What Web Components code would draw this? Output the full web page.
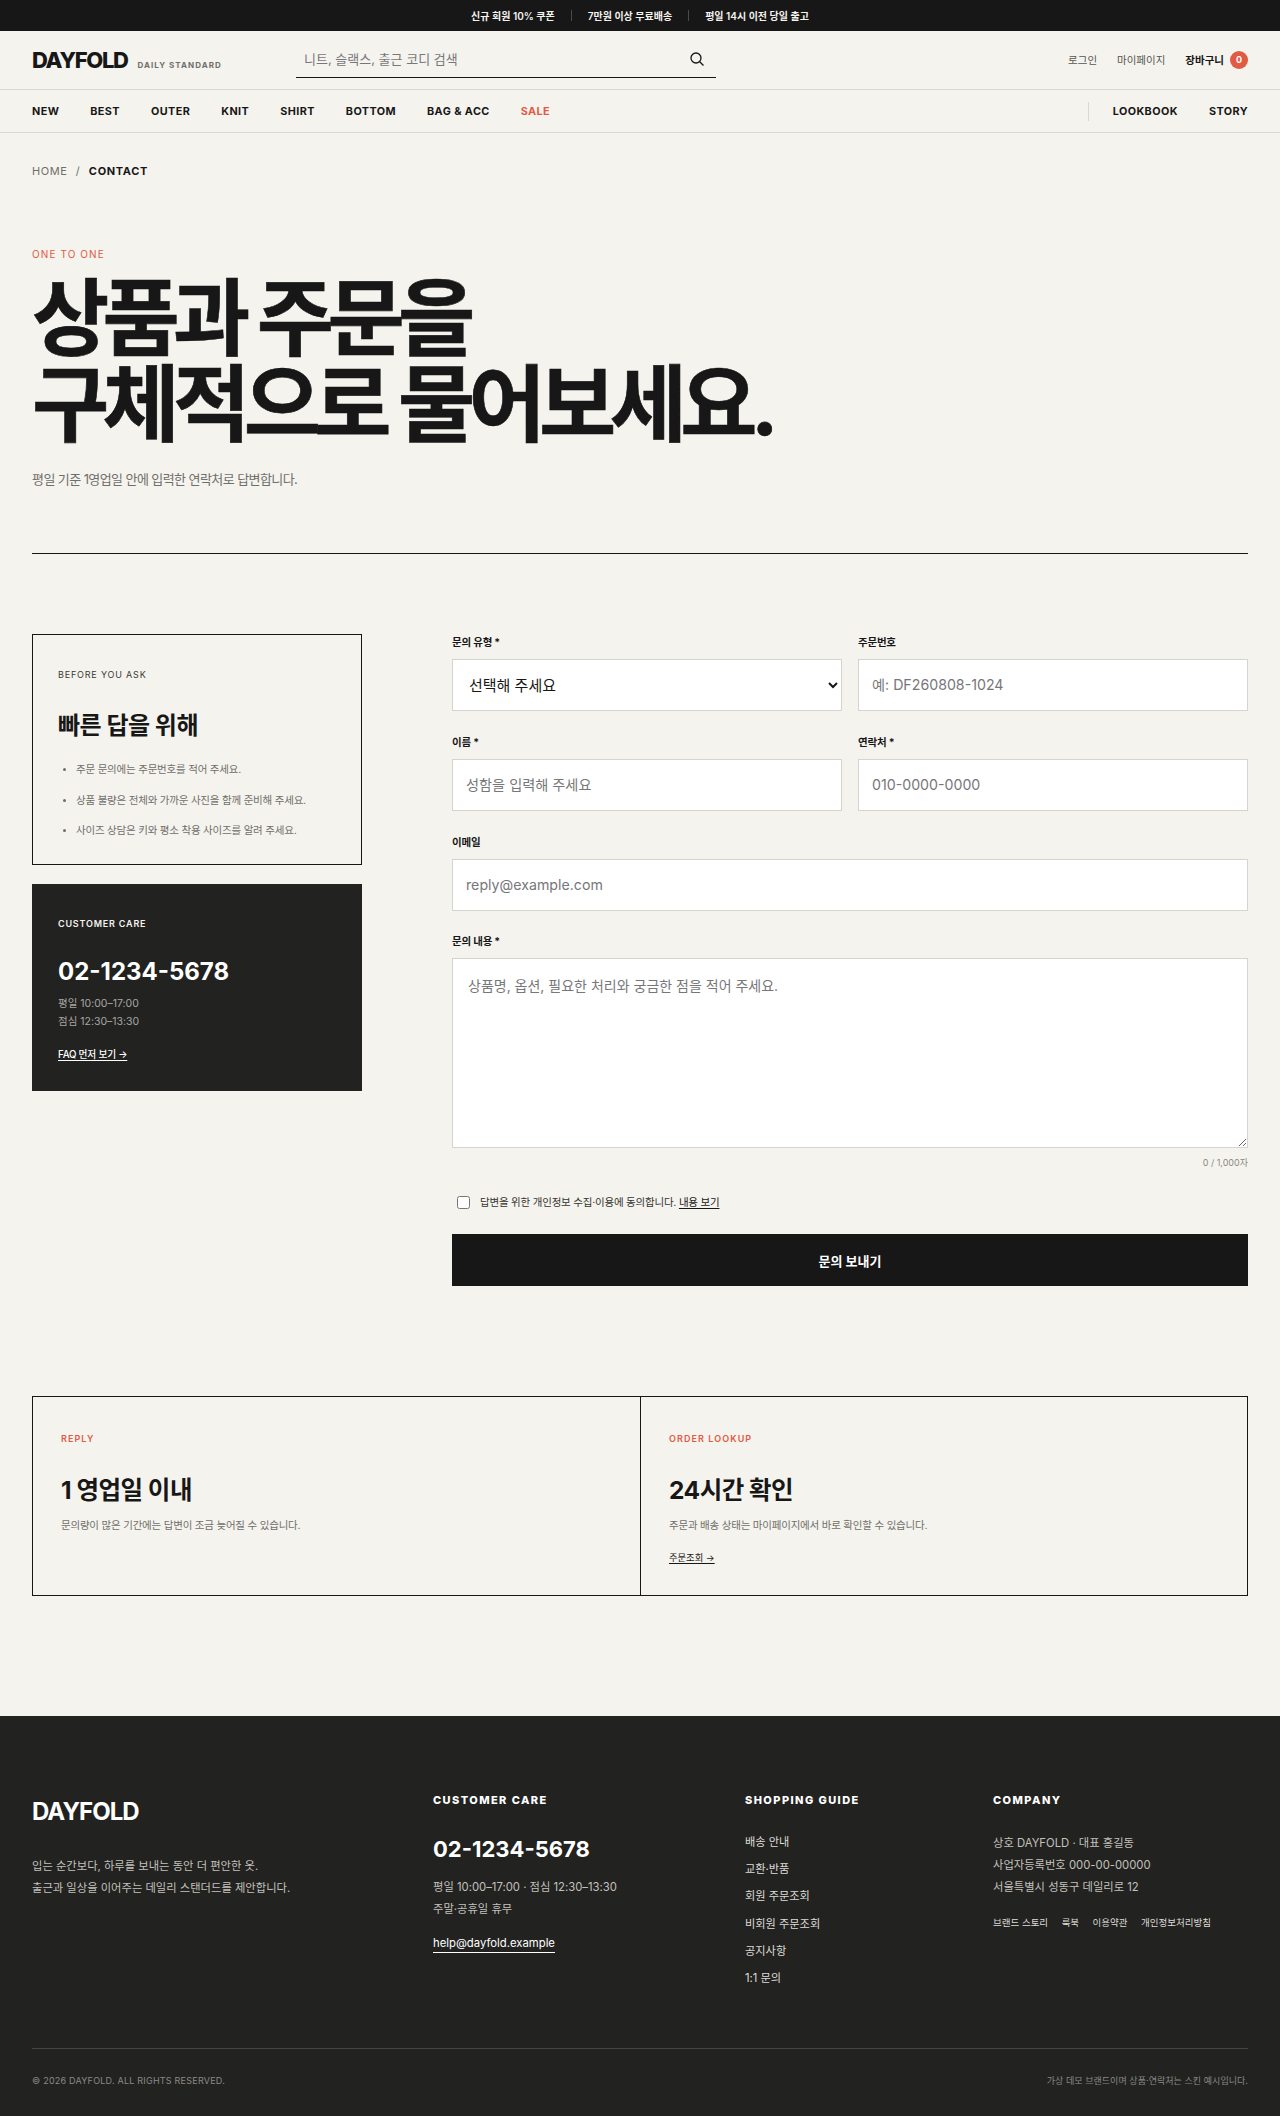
<!doctype html>
<html lang="ko">
<head>
<meta charset="utf-8">
<title>DAYFOLD - 1:1 문의</title>
<style>
  html, body { margin: 0; background: #f5f3ee; color: #171717; }
  body { font-family: Inter, "Noto Sans CJK KR", sans-serif; }
</style>
</head>
<body>
<site-topbar></site-topbar>
<site-header></site-header>
<site-nav></site-nav>
<bread-crumbs></bread-crumbs>
<contact-hero></contact-hero>
<contact-section>
  <ask-aside slot="aside"></ask-aside>
  <contact-form slot="form"></contact-form>
</contact-section>
<info-strip></info-strip>
<site-footer></site-footer>

<template id="site-topbar">
  <style>
    :host { display: flex; justify-content: center; align-items: center; height: 31px; background: #171717; color: #f5f3ee; font-size: 10px; font-weight: 600; }
    i { width: 1px; height: 11px; background: #4a4a4a; margin: 0 16px; }
  </style>
  <span>신규 회원 10% 쿠폰</span><i></i><span>7만원 이상 무료배송</span><i></i><span>평일 14시 이전 당일 출고</span>
</template>

<template id="site-header">
  <style>
    :host { display: grid; grid-template-columns: 264px 420px 1fr; align-items: center; height: 58px; padding: 0 32px; border-bottom: 1px solid #dad8d3; box-sizing: content-box; }
    .brand { display: flex; align-items: baseline; gap: 9px; }
    .logo { font-size: 22px; font-weight: 800; letter-spacing: -0.06em; }
    .tag { font-size: 8px; font-weight: 700; letter-spacing: .13em; color: #6f6f6a; margin-left: 1px; }
    .search { display: flex; align-items: center; justify-content: space-between; box-sizing: border-box; height: 36px; border-bottom: 1px solid #171717; padding: 0 11px 2px 8px; font-size: 13px; color: #77777a; }
    .search svg { display: block; }
    .util { display: flex; justify-content: flex-end; align-items: center; gap: 20px; margin-top: -1px; font-size: 10.5px; color: #55554f; }
    .cart { display: flex; align-items: center; gap: 6px; color: #171717; font-weight: 700; }
    .count { display: grid; place-items: center; width: 18px; height: 18px; border-radius: 50%; background: #e05a44; color: #fff; font-size: 9px; font-weight: 700; }
  </style>
  <div class="brand"><span class="logo">DAYFOLD</span><span class="tag">DAILY STANDARD</span></div>
  <div class="search">
    <span>니트, 슬랙스, 출근 코디 검색</span>
    <svg width="16" height="16" viewBox="0 0 16 16" fill="none" stroke="#171717" stroke-width="1.3"><circle cx="7" cy="7" r="5"/><path d="M10.7 10.7 14.5 14.5"/></svg>
  </div>
  <div class="util"><span>로그인</span><span>마이페이지</span><span class="cart">장바구니 <span class="count">0</span></span></div>
</template>

<template id="site-nav">
  <style>
    :host { display: flex; justify-content: space-between; align-items: center; height: 42px; padding: 0 32px; border-bottom: 1px solid #dad8d3; font-size: 10.8px; font-weight: 700; letter-spacing: .04em; }
    .left, .right { display: flex; align-items: center; gap: 31px; }
    .right { border-left: 1px solid #dad8d3; padding-left: 24px; height: 19px; }
    .sale { color: #e05a44; }
  </style>
  <div class="left"><span>NEW</span><span>BEST</span><span>OUTER</span><span>KNIT</span><span>SHIRT</span><span>BOTTOM</span><span>BAG &amp; ACC</span><span class="sale">SALE</span></div>
  <div class="right"><span>LOOKBOOK</span><span>STORY</span></div>
</template>

<template id="bread-crumbs">
  <style>
    :host { display: flex; align-items: center; gap: 8.5px; padding: 31px 32px 1px; height: 14px; font-size: 11px; letter-spacing: .05em; color: #6f6f6a; }
    b { color: #171717; font-weight: 700; letter-spacing: .06em; }
  </style>
  <span>HOME</span><span>/</span><b>CONTACT</b>
</template>

<template id="contact-hero">
  <style>
    :host { display: block; margin: 0 32px; padding: 68px 0 64px; border-bottom: 1px solid #171717; }
    .eyebrow { font-size: 10px; letter-spacing: .11em; color: #e05a44; line-height: 14px; }
    h1 { margin: 15px 0 21px; font-size: 84px; line-height: 86px; font-weight: 700; letter-spacing: -0.08em; -webkit-text-stroke: 0.6px #171717; }
    p { margin: 0; font-size: 13px; line-height: 20px; color: #6f6f6a; letter-spacing: -0.045em; }
  </style>
  <div class="eyebrow">ONE TO ONE</div>
  <h1>상품과 주문을<br>구체적으로 물어보세요.</h1>
  <p>평일 기준 1영업일 안에 입력한 연락처로 답변합니다.</p>
</template>

<template id="contact-section">
  <style>
    :host { display: grid; grid-template-columns: 330px 1fr; gap: 90px; padding: 80px 32px 0; }
  </style>
  <slot name="aside"></slot>
  <slot name="form"></slot>
</template>

<template id="ask-aside">
  <style>
    :host { display: flex; flex-direction: column; gap: 19px; }
    .box { box-sizing: border-box; padding: 33px 25px 0; }
    .tips { height: 231px; border: 1px solid #171717; }
    .care { height: 207px; padding: 33px 26px 0; background: #222221; color: #f5f3ee; }
    .kicker { font-size: 9px; line-height: 14px; letter-spacing: .09em; color: #3a3a37; }
    .care .kicker { font-weight: 600; color: #f5f3ee; }
    h3 { margin: 28px 0 20px; font-size: 24px; line-height: 32px; font-weight: 700; letter-spacing: -0.02em; }
    ul { margin: 0; padding: 0 0 0 18px; font-size: 10.5px; letter-spacing: -0.02em; color: #6f6f6a; }
    li { line-height: 16px; margin-bottom: 14.5px; }
    li::marker { font-size: 9px; }
    .tel { margin-top: 25px; font-size: 24px; line-height: 32px; font-weight: 700; color: #fff; }
    .hours { margin-top: 7px; font-size: 10.5px; line-height: 18px; color: #a7a6a1; }
    a { display: inline-block; margin-top: 16px; font-size: 9.7px; font-weight: 500; letter-spacing: -0.02em; color: #fff; text-decoration: underline; text-underline-offset: 2px; }
  </style>
  <div class="box tips">
    <div class="kicker">BEFORE YOU ASK</div>
    <h3>빠른 답을 위해</h3>
    <ul>
      <li>주문 문의에는 주문번호를 적어 주세요.</li>
      <li>상품 불량은 전체와 가까운 사진을 함께 준비해 주세요.</li>
      <li>사이즈 상담은 키와 평소 착용 사이즈를 알려 주세요.</li>
    </ul>
  </div>
  <div class="box care">
    <div class="kicker">CUSTOMER CARE</div>
    <div class="tel">02-1234-5678</div>
    <div class="hours">평일 10:00–17:00<br>점심 12:30–13:30</div>
    <a>FAQ 먼저 보기 →</a>
  </div>
</template>

<template id="form-field">
  <style>
    :host { display: block; min-width: 0; }
    .label { display: block; height: 25px; font-size: 10.5px; line-height: 18px; font-weight: 700; letter-spacing: -0.02em; }
    ::slotted(input), ::slotted(select), ::slotted(textarea) { display: block; box-sizing: border-box; width: 100%; height: 52px; margin: 0; border: 1px solid #d6d4cf; border-radius: 0; background: #fff; padding: 0 13px 2px; font: 400 14.2px Inter, "Noto Sans CJK KR", sans-serif; color: #171717; }
    ::slotted(select) { padding: 0 12px; font-size: 15px; }
    ::slotted(textarea) { height: 190px; padding: 16px 15px; line-height: 22px; font-size: 14px; }
  </style>
  <div class="label"><slot name="label"></slot></div>
  <slot></slot>
</template>

<template id="contact-form">
  <style>
    :host { display: block; }
    .grid { display: grid; grid-template-columns: 1fr 1fr; gap: 23px 16px; }
    .wide { grid-column: 1 / -1; }
    .message { margin-top: -1px; }
    .count { margin-top: 8px; text-align: right; font-size: 9px; line-height: 14px; color: #8b8a85; }
    .agree { display: flex; align-items: center; gap: 10px; margin: 20px 0 0 5px; height: 24px; font-size: 10.5px; letter-spacing: -0.02em; color: #33332f; }
    .agree input { width: 13px; height: 13px; margin: 1px 0 0; }
    .agree span { margin-top: -2px; }
    .agree u { text-underline-offset: 2px; color: #171717; }
    button { display: block; width: 100%; height: 52px; margin-top: 20px; border: 0; background: #171717; color: #fff; font: 700 13px Inter, "Noto Sans CJK KR", sans-serif; }
    input::placeholder, textarea::placeholder { color: #77777a; }
  </style>
  <div class="grid">
    <form-field><span slot="label">문의 유형 *</span><select><option>선택해 주세요</option></select></form-field>
    <form-field><span slot="label">주문번호</span><input placeholder="예: DF260808-1024"></form-field>
    <form-field><span slot="label">이름 *</span><input placeholder="성함을 입력해 주세요"></form-field>
    <form-field><span slot="label">연락처 *</span><input placeholder="010-0000-0000"></form-field>
    <form-field class="wide"><span slot="label">이메일</span><input placeholder="reply@example.com"></form-field>
    <form-field class="wide message"><span slot="label">문의 내용 *</span><textarea placeholder="상품명, 옵션, 필요한 처리와 궁금한 점을 적어 주세요."></textarea></form-field>
  </div>
  <div class="count">0 / 1,000자</div>
  <div class="agree"><input type="checkbox"><span>답변을 위한 개인정보 수집·이용에 동의합니다. <u>내용 보기</u></span></div>
  <button type="button">문의 보내기</button>
</template>

<template id="info-strip">
  <style>
    :host { display: grid; grid-template-columns: 1fr 1fr; height: 200px; margin: 110px 32px 0; border: 1px solid #171717; box-sizing: border-box; }
    div { padding: 29px 28px; }
    div + div { border-left: 1px solid #171717; }
    .kicker { font-size: 9px; line-height: 14px; font-weight: 600; letter-spacing: .12em; color: #e05a44; }
    h3 { margin: 27px 0 11px; font-size: 24.5px; line-height: 34px; font-weight: 700; letter-spacing: -0.02em; }
    p { margin: 0; font-size: 10.5px; line-height: 16px; letter-spacing: -0.02em; color: #6f6f6a; }
    a { display: inline-block; margin-top: 16px; font-size: 9.3px; color: #171717; text-decoration: underline; text-underline-offset: 2px; }
  </style>
  <div><span class="kicker">REPLY</span><h3>1 영업일 이내</h3><p>문의량이 많은 기간에는 답변이 조금 늦어질 수 있습니다.</p></div>
  <div><span class="kicker">ORDER LOOKUP</span><h3>24시간 확인</h3><p>주문과 배송 상태는 마이페이지에서 바로 확인할 수 있습니다.</p><a>주문조회 →</a></div>
</template>

<template id="site-footer">
  <style>
    :host { display: block; box-sizing: border-box; height: 400px; margin-top: 120px; padding: 77px 32px 0; background: #222221; color: #f5f3ee; }
    .cols { display: grid; grid-template-columns: 401px 312px 248px 1fr; height: 255px; border-bottom: 1px solid #454542; }
    .logo { font-size: 24px; line-height: 32px; font-weight: 700; letter-spacing: -0.04em; color: #fff; margin-top: 3px; }
    .muted { font-size: 11.3px; line-height: 22px; color: #c2c1bb; }
    h4 { margin: 0; font-size: 11px; line-height: 14px; font-weight: 800; letter-spacing: .13em; color: #fff; }
    .tel { margin-top: 27px; font-size: 22px; line-height: 30px; font-weight: 700; color: #fff; }
    a { color: inherit; }
    .mail { display: inline-block; margin-top: 14px; font-size: 11.3px; line-height: 18px; color: #fff; border-bottom: 1px solid #fff; }
    .links { display: flex; flex-direction: column; gap: 8.7px; margin-top: 26px; font-size: 11.2px; line-height: 18.5px; color: #dedcd6; }
    .sub { display: flex; gap: 13.5px; margin-top: 17px; font-size: 9.5px; line-height: 16px; color: #dedcd6; }
    .bottom { display: flex; justify-content: space-between; align-items: center; height: 62px; font-size: 9px; letter-spacing: .025em; color: #8b8a85; }
    .bottom span + span { letter-spacing: .005em; }
  </style>
  <div class="cols">
    <div>
      <div class="logo">DAYFOLD</div>
      <div class="muted" style="margin-top:27px">입는 순간보다, 하루를 보내는 동안 더 편안한 옷.<br>출근과 일상을 이어주는 데일리 스탠더드를 제안합니다.</div>
    </div>
    <div>
      <h4>CUSTOMER CARE</h4>
      <div class="tel">02-1234-5678</div>
      <div class="muted" style="margin-top:12px">평일 10:00–17:00 · 점심 12:30–13:30<br>주말·공휴일 휴무</div>
      <a class="mail">help@dayfold.example</a>
    </div>
    <div>
      <h4>SHOPPING GUIDE</h4>
      <div class="links"><span>배송 안내</span><span>교환·반품</span><span>회원 주문조회</span><span>비회원 주문조회</span><span>공지사항</span><span>1:1 문의</span></div>
    </div>
    <div>
      <h4>COMPANY</h4>
      <div class="muted" style="margin-top:25px">상호 DAYFOLD · 대표 홍길동<br>사업자등록번호 000-00-00000<br>서울특별시 성동구 데일리로 12</div>
      <div class="sub"><span>브랜드 스토리</span><span>룩북</span><span>이용약관</span><span>개인정보처리방침</span></div>
    </div>
  </div>
  <div class="bottom"><span>© 2026 DAYFOLD. ALL RIGHTS RESERVED.</span><span>가상 데모 브랜드이며 상품·연락처는 스킨 예시입니다.</span></div>
</template>

<script>
  // every element just clones the template with its own tag name
  ['site-topbar', 'site-header', 'site-nav', 'bread-crumbs', 'contact-hero', 'contact-section',
   'ask-aside', 'form-field', 'contact-form', 'info-strip', 'site-footer'].forEach((name) => {
    customElements.define(name, class extends HTMLElement {
      constructor() {
        super();
        const templ = document.querySelector('#' + name);
        this.attachShadow({mode: 'open'}).appendChild(templ.content.cloneNode(true));
      }
    });
  });
</script>
</body>
</html>
